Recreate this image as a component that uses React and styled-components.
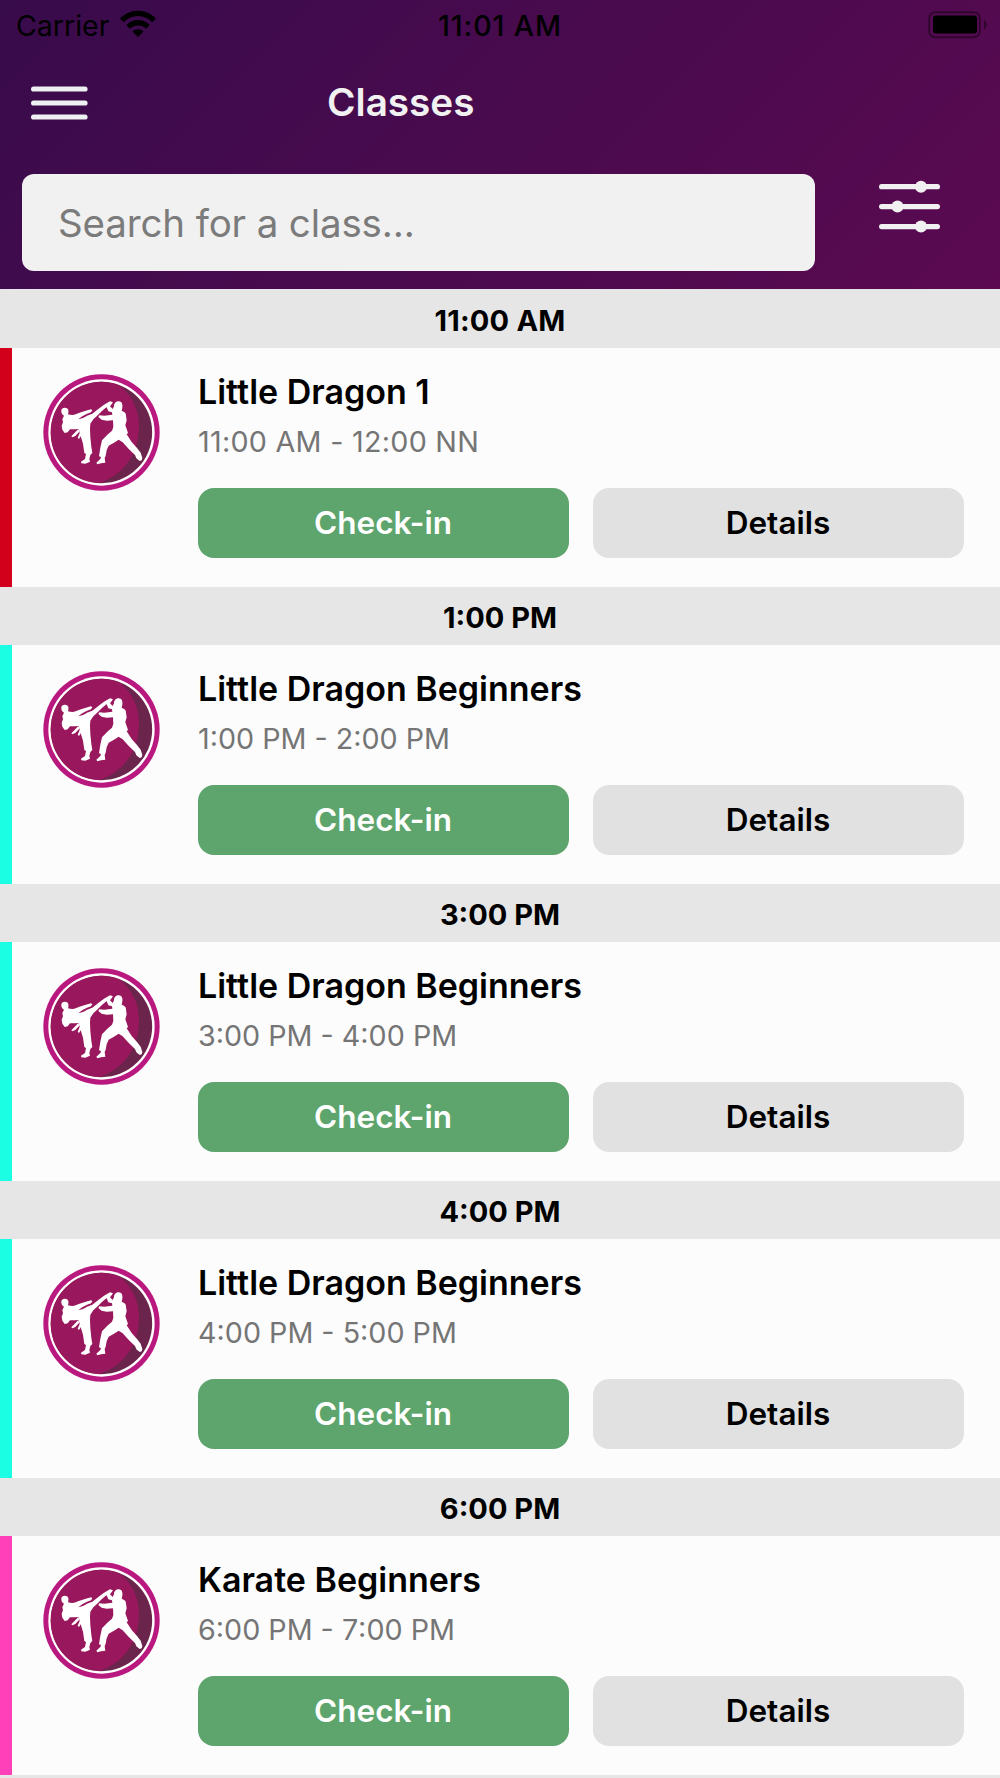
import React from "react";
import styled, { createGlobalStyle } from "styled-components";

const colors = {
  light: "#f1f1f1",
  band: "#e6e6e6",
  row: "#fcfcfc",
  green: "#5da56d",
  gray: "#e1e1e1",
  muted: "#757575",
  red: "#d3001b",
  cyan: "#1cfee3",
  pink: "#ff40b9",
};

const GlobalStyle = createGlobalStyle`
  * {
    box-sizing: border-box;
  }
  body {
    margin: 0;
    background-color: ${colors.band};
    font-family: Inter, "Liberation Sans", sans-serif;
    color: #000;
  }
`;

const Screen = styled.div`
  width: 1000px;
  height: 1778px;
  overflow: hidden;
  background-color: ${colors.band};
`;

const Header = styled.header`
  height: 289px;
  background: linear-gradient(135deg, #380b4b, #5b0a51);
`;

const StatusBar = styled.div`
  display: grid;
  grid-template-columns: 1fr auto 1fr;
  align-items: center;
  height: 51px;
  padding: 0 16px;
  font-size: 28.5px;
  line-height: 51px;
`;

const Carrier = styled.div`
  display: flex;
  align-items: center;
  gap: 10px;

  svg {
    margin-top: -4px;
  }
`;

const Clock = styled.div`
  font-weight: 500;
  letter-spacing: 0.95px;
  font-kerning: none;
`;

const Battery = styled.svg`
  justify-self: end;
  margin: -2px -3px 0 0;
`;

const NavBar = styled.div`
  display: flex;
  align-items: center;
  height: 104px;
  padding-left: 31px;
`;

const Title = styled.h1`
  margin: -2px 0 0 239px;
  font-size: 38.7px;
  font-weight: 600;
  line-height: 48px;
  color: ${colors.light};
`;

const SearchBar = styled.div`
  display: flex;
  padding: 19px 60px 0 22px;
  justify-content: space-between;
`;

const SearchInput = styled.input`
  width: 793px;
  height: 96.5px;
  padding: 2px 36px 0;
  border: 0;
  border-radius: 12px;
  background-color: ${colors.light};
  font-family: inherit;
  font-size: 38.5px;
  letter-spacing: -0.13px;

  &::placeholder {
    color: #7b7b7b;
    opacity: 1;
  }
`;

const FilterIcon = styled.svg`
  margin-top: 6px;
`;

const TimeBand = styled.div`
  height: ${({ $first }) => ($first ? 59 : 58)}px;
  padding-top: ${({ $first }) => ($first ? 4 : 3)}px;
  text-align: center;
  font-size: 29px;
  font-weight: 700;
  line-height: 56px;
  letter-spacing: ${({ $first }) => ($first ? 0.2 : 0)}px;
`;

const Row = styled.div`
  display: flex;
  height: 239px;
  padding: 26px 36px 0 31px;
  border-left: 12px solid ${({ $color }) => $color};
  background-color: ${colors.row};
`;

const Info = styled.div`
  flex: 1;
  margin-left: 38px;
`;

const Name = styled.div`
  margin-top: -3px;
  font-size: 34px;
  font-weight: 600;
  line-height: 42px;
`;

const Time = styled.div`
  margin-top: 11px;
  font-size: 28.7px;
  line-height: 36px;
  font-kerning: none;
  letter-spacing: ${({ $wide }) => ($wide ? 0.28 : 0)}px;
  color: ${colors.muted};
`;

const Actions = styled.div`
  display: flex;
  gap: 24px;
  margin-top: 28px;
`;

const Button = styled.button`
  flex: 1;
  height: 70px;
  padding: 0 1px 2px 0;
  border: 0;
  border-radius: 16px;
  font-family: inherit;
  font-size: 31.5px;
  font-weight: 600;
  color: ${({ $primary }) => ($primary ? "#fff" : "#000")};
  background-color: ${({ $primary }) =>
    $primary ? colors.green : colors.gray};
`;

const WifiIcon = () => (
  <svg width="38" height="28" viewBox="0 0 38 28">
    <path d="M1 8.6C11-2 27-2 37 8.6L33.3 12.3C25.3 4 12.7 4 4.7 12.3Z" />
    <path d="M7.3 15C14 8.2 24 8.2 30.7 15L27 18.7C22.5 14.3 15.5 14.3 11 18.7Z" />
    <path d="M13.6 21.4C16.6 18.5 21.4 18.5 24.4 21.4L19 27Z" />
  </svg>
);

const BatteryIcon = () => (
  <Battery width="59" height="28" viewBox="0 0 59 28">
    <g opacity="0.4">
      <rect x="1.2" y="1.2" width="50.6" height="25" rx="6" fill="none" stroke="#000" strokeWidth="2" />
      <path d="M56 9C59.7 10.5 59.7 17 56 18.5Z" />
    </g>
    <rect x="5" y="4.5" width="44" height="18" rx="3" />
  </Battery>
);

const MenuIcon = () => (
  <svg width="57" height="34" viewBox="0 0 57 34">
    <path
      d="M2.6 3H54M2.6 17H54M2.6 31H54"
      stroke="#eef0f2"
      strokeWidth="5.2"
      strokeLinecap="round"
    />
  </svg>
);

const Sliders = () => (
  <FilterIcon width="61" height="54" viewBox="0 0 61 54">
    <g fill={colors.light}>
      <path
        d="M2.6 6.7H58.4M2.6 26.6H58.4M2.6 46.6H58.4"
        stroke={colors.light}
        strokeWidth="5.2"
        strokeLinecap="round"
      />
      <circle cx="42" cy="6.7" r="6" />
      <circle cx="18.5" cy="26.6" r="6" />
      <circle cx="42" cy="46.6" r="6" />
    </g>
  </FilterIcon>
);

const Logo = () => (
  <svg width="117" height="117" viewBox="39 41 351 351">
    <circle cx="214.5" cy="216.5" r="174.5" fill="#b9187f" />
    <circle cx="214.5" cy="216.5" r="159.5" fill="#fff" />
    <circle cx="214.5" cy="216.5" r="152" fill="#6b244b" />
    {/* lit side of the disc */}
    <path
      d="M268 74.5C308 106 327 150 327 198C327 280 282 343 208 368.4A152 152 0 1 1 268 74.5Z"
      fill="#99175d"
    />
    <g fill="#fff">
      <path d="M94 153C92 142 106 139 113 145C117 150 115 157 114 162C122 164 130 165 137 162C148 157 166 152 183 147L187 150L183 156L171 160C161 165 152 170 145 177C158 174 165 170 171 166L187 160L205 146L222 133L240 123L249 126L242 134L229 141L215 153L203 165L190 177L181 190L180 205L181 230L184 260L187 278L181 284L178 296L180 304L166 310L154 309L153 304L165 296L168 281L163 278L159 250L151 224L146 206L134 207L120 207L113 216L104 218L97 208L95 196L99 186L97 176L102 166C96 163 94 158 94 153Z" />
      <path d="M145 206L124 228L127 231L136 227L148 214ZM150 216L143 232L147 236L156 222Z" />
      <path d="M252 138C252 120 275 118 277 133C278 141 276 147 275 151C284 154 289 159 288 166L290 180L286 195L291 209L294 218L290 222L305 245L321 263L332 277L337 293L335 300L329 302L319 294L315 284L297 267L278 246L266 238L252 247L236 256L230 270L227 286L224 293L226 307L213 309L202 312L199 307L211 296L213 290L207 288L211 262L216 240L232 223L246 211L250 200L249 180L230 181L215 178L205 170L208 165L223 166L247 163L246 156L235 153L231 143L227 137L235 129L247 128L240 138L248 146Z" />
    </g>
  </svg>
);

const classes = [
  { start: "11:00 AM", name: "Little Dragon 1", time: "11:00 AM - 12:00 NN", color: colors.red },
  { start: "1:00 PM", name: "Little Dragon Beginners", time: "1:00 PM - 2:00 PM", color: colors.cyan },
  { start: "3:00 PM", name: "Little Dragon Beginners", time: "3:00 PM - 4:00 PM", color: colors.cyan },
  { start: "4:00 PM", name: "Little Dragon Beginners", time: "4:00 PM - 5:00 PM", color: colors.cyan },
  { start: "6:00 PM", name: "Karate Beginners", time: "6:00 PM - 7:00 PM", color: colors.pink },
];

export default () => (
  <Screen>
    <GlobalStyle />
    <Header>
      <StatusBar>
        <Carrier>
          Carrier
          <WifiIcon />
        </Carrier>
        <Clock>11:01 AM</Clock>
        <BatteryIcon />
      </StatusBar>
      <NavBar>
        <MenuIcon />
        <Title>Classes</Title>
      </NavBar>
      <SearchBar>
        <SearchInput placeholder="Search for a class..." />
        <Sliders />
      </SearchBar>
    </Header>
    {classes.map(({ start, name, time, color }, i) => (
      <React.Fragment key={start}>
        <TimeBand $first={i === 0}>{start}</TimeBand>
        <Row $color={color}>
          <Logo />
          <Info>
            <Name>{name}</Name>
            <Time $wide={i === 0}>{time}</Time>
            <Actions>
              <Button $primary>Check-in</Button>
              <Button>Details</Button>
            </Actions>
          </Info>
        </Row>
      </React.Fragment>
    ))}
  </Screen>
);
